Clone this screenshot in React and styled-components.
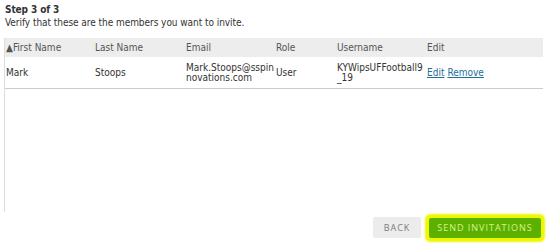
import React from 'react'
import styled, { createGlobalStyle } from 'styled-components'

const Global = createGlobalStyle`
  body {
    margin: 0;
    background: #fff;
    font-family: "DejaVu Sans Condensed", "DejaVu Sans", Verdana, sans-serif;
    color: #333;
  }
`

const Page = styled.div`
  width: 550px;
  height: 246px;
  padding: 4px 5px 0 5px;
  box-sizing: border-box;
`

const StepTitle = styled.div`
  font-weight: bold;
  font-size: 10px;
  line-height: 12px;
  letter-spacing: -0.1px;
  color: #333;
`

const Subtitle = styled.div`
  font-size: 10px;
  line-height: 12px;
  letter-spacing: -0.05px;
  color: #333;
  margin-top: 1px;
`

const TableBox = styled.div`
  margin: 9px 2px 0 -1px;
  height: 174px;
  border-left: 1px solid #ddd;
`

const Row = styled.div`
  display: grid;
  grid-template-columns: 90px 91px 90px 61px 90px 1fr;
  align-items: center;
  background: ${p => (p.$head ? '#ededed' : '#fff')};
  height: ${p => (p.$head ? '19px' : '31px')};
  border-bottom: ${p => (p.$head ? 'none' : '1px solid #ccc')};
`

const Cell = styled.div`
  font-size: 10px;
  line-height: 10px;
  letter-spacing: 0;
  color: ${p => (p.$head ? '#555' : '#333')};
  padding-left: ${p => (p.$first ? '1px' : '0')};
  white-space: nowrap;
`

const Link = styled.a`
  color: #1f6f9a;
  text-decoration: underline;
  margin-right: 3px;
  cursor: pointer;
`

const Footer = styled.div`
  display: flex;
  justify-content: flex-end;
  align-items: center;
  gap: 8px;
  padding-right: 4px;
  margin-top: 5px;
`

const Button = styled.button`
  font-family: "Open Sans", "Liberation Sans", sans-serif;
  font-size: 9px;
  letter-spacing: 1px;
  text-transform: uppercase;
  border: none;
  border-radius: 2px;
  height: ${p => (p.$primary ? '20px' : '21px')};
  width: ${p => (p.$primary ? '112px' : '48px')};
  padding: 0;
  background: ${p => (p.$primary ? '#5cb100' : '#ececec')};
  color: ${p => (p.$primary ? '#d9f28a' : '#7a7a7a')};
  box-shadow: ${p => (p.$primary ? '0 0 2px 4px #eef700' : 'none')};
`

const columns = ['▲First Name', 'Last Name', 'Email', 'Role', 'Username', 'Edit']

export default function App() {
  return (
    <Page>
      <Global />
      <StepTitle>Step 3 of 3</StepTitle>
      <Subtitle>Verify that these are the members you want to invite.</Subtitle>
      <TableBox>
        <Row $head>
          {columns.map((c, i) => (
            <Cell key={c} $head $first={i === 0}>{c}</Cell>
          ))}
        </Row>
        <Row>
          <Cell $first>Mark</Cell>
          <Cell>Stoops</Cell>
          <Cell>Mark.Stoops@sspin<br />novations.com</Cell>
          <Cell>User</Cell>
          <Cell>KYWipsUFFootball9<br />_19</Cell>
          <Cell>
            <Link>Edit</Link>
            <Link>Remove</Link>
          </Cell>
        </Row>
      </TableBox>
      <Footer>
        <Button>Back</Button>
        <Button $primary>Send Invitations</Button>
      </Footer>
    </Page>
  )
}
